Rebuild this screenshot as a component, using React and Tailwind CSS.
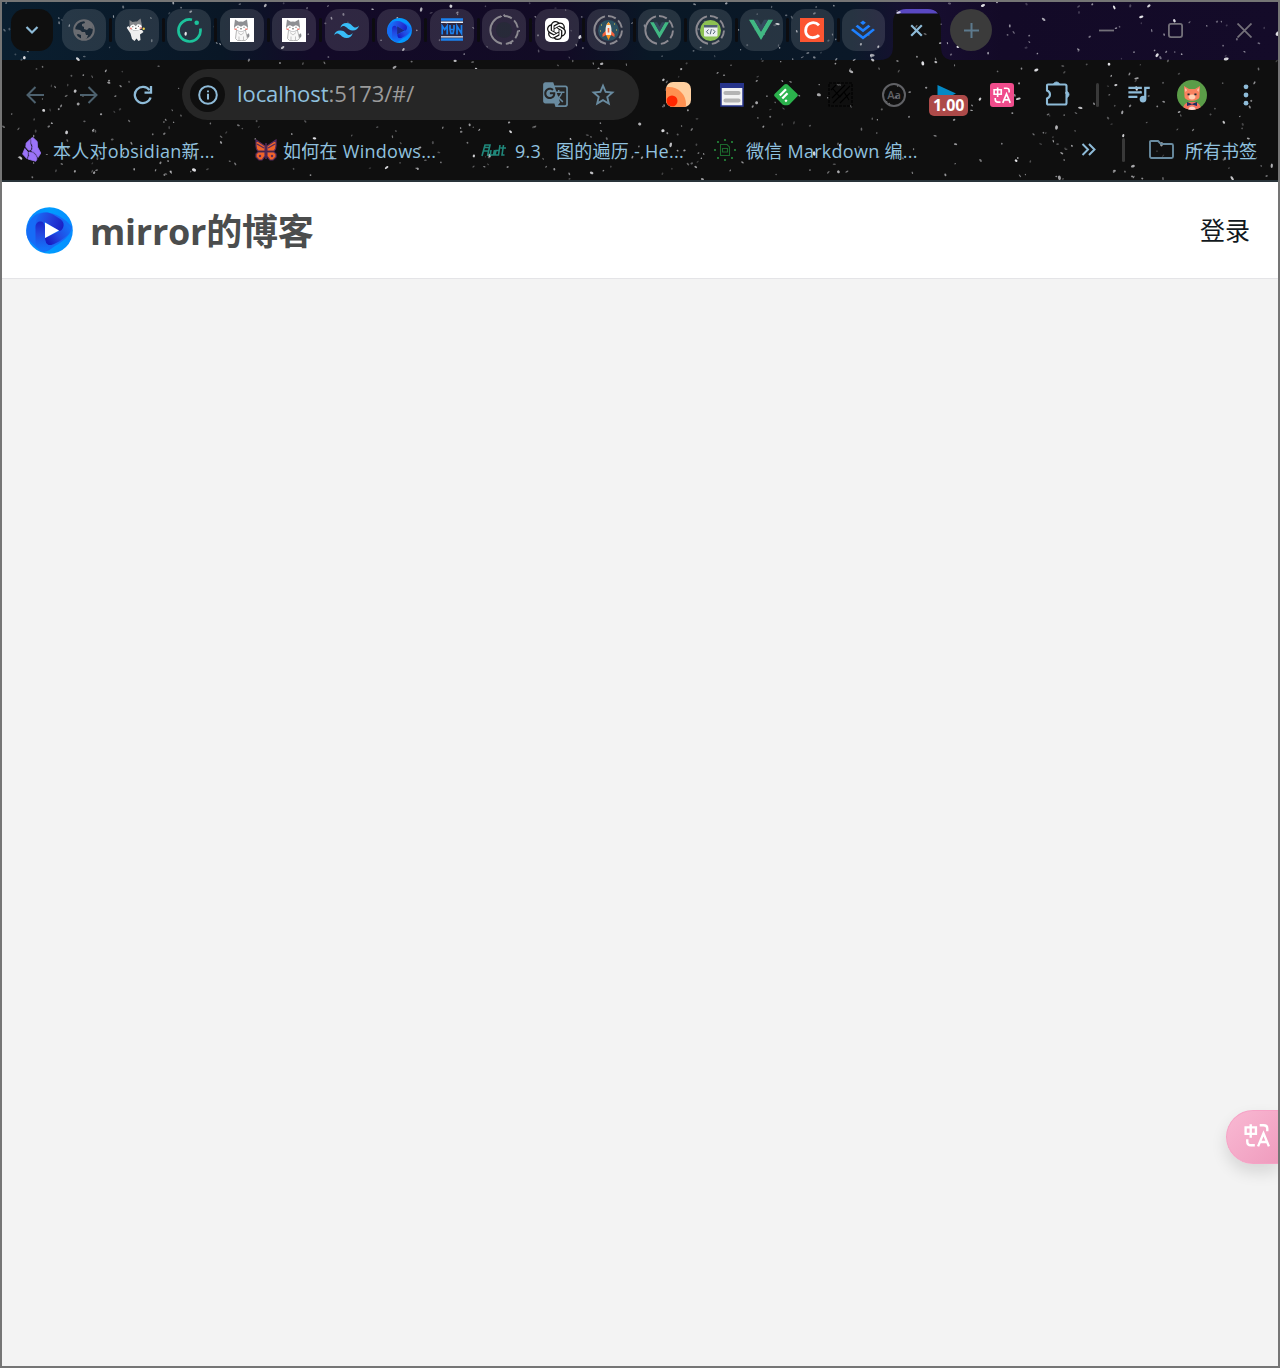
import React from "react";
import { SiOpenai, SiTailwindcss, SiJuejin } from "react-icons/si";
import { MdQueueMusic, MdGTranslate, MdStarBorder } from "react-icons/md";

const FONT = "font-['Open_Sans','Noto_Sans_CJK_SC',sans-serif]";

/* Deterministic star field behind the browser chrome. */
function makeStars() {
  let s = 20731;
  const rnd = () => {
    s = (s * 16807) % 2147483647;
    return s / 2147483647;
  };
  return Array.from({ length: 680 }, () => {
    const big = rnd() < 0.13;
    return {
      x: rnd() * 1276,
      y: rnd() * 178,
      rx: (big ? 1.4 : 0.7) + rnd() * 1,
      ry: (big ? 1 : 0.55) + rnd() * 0.5,
      a: rnd() * 180,
      o: big ? 0.65 + rnd() * 0.35 : 0.2 + rnd() * 0.5,
    };
  });
}
const STARS = makeStars();

/* Tab strip gradient, the raised shape of the active tab, and the stars over both. */
function Backdrop() {
  return (
    <div className="absolute inset-0 -z-10 bg-[#0f0f0f]">
      <div className="h-[58px] bg-[linear-gradient(90deg,#0a1f30_0px,#091726_220px,#130a28_310px,#120b25_560px,#091826_650px,#0a1828_850px,#180f32_910px,#130a27_1000px,#140b29_1276px)]" />
      <svg className="absolute left-0 top-0" width="1276" height="178">
        <g transform="translate(878 0)">
          <path d="M0 58C9 58 13 53 13 45V21C13 12 18 7 26 7H48C57 7 61 12 61 21V45C61 53 65 58 72 58Z" fill="#0f0f0f" />
          <path d="M16 11.5C19 8 22 7 26 7H48C52 7 55 8 58 11.5Z" fill="#5948c2" />
        </g>
        <g fill="#e8e8ec">
          {STARS.map((p, i) => (
            <ellipse key={i} cx={p.x} cy={p.y} rx={p.rx} ry={p.ry} opacity={p.o} transform={`rotate(${p.a} ${p.x} ${p.y})`} />
          ))}
        </g>
      </svg>
    </div>
  );
}

/* Three folded ribbons around a triangular centre. */
function Swirl({ size, play }) {
  return (
    <svg width={size} height={size} viewBox="0 0 47 47">
      <defs>
        <clipPath id="sw-clip"><circle cx="23.5" cy="23.5" r="23.3" /></clipPath>
        <linearGradient id="sw-bg" x1="0" y1="0" x2="1" y2="0"><stop offset="0" stopColor="#0a86ff" /><stop offset=".5" stopColor="#009dff" /><stop offset="1" stopColor="#078cff" /></linearGradient>
        <linearGradient id="sw-top" gradientUnits="userSpaceOnUse" x1="10" y1="10" x2="38" y2="22"><stop offset="0" stopColor="#1768f5" /><stop offset=".45" stopColor="#2542dc" /><stop offset="1" stopColor="#171dc2" /></linearGradient>
        <linearGradient id="sw-left" gradientUnits="userSpaceOnUse" x1="14" y1="12" x2="14" y2="42"><stop offset="0" stopColor="#171dc2" /><stop offset=".5" stopColor="#2348e0" /><stop offset="1" stopColor="#1273fa" /></linearGradient>
        <linearGradient id="sw-low" gradientUnits="userSpaceOnUse" x1="22" y1="35" x2="44" y2="20"><stop offset="0" stopColor="#171dc2" /><stop offset=".45" stopColor="#2348e0" /><stop offset="1" stopColor="#1273fa" /></linearGradient>
      </defs>
      <g clipPath="url(#sw-clip)">
        <rect width="47" height="47" fill="url(#sw-bg)" />
        <path d="M0 30C-1 16 8 5 18 5.5C28 5 39 11 46 20C44 30 36 35 29 39C24 43 20 45.5 16 44.5L10 40Z" fill="#166cf7" />
        <path d="M9.5 22V18C9.5 7 18 2.5 27 7.5L35 12.5C42 17 40 24 35 25L19 15Z" fill="url(#sw-top)" />
        <path d="M35 12.5C41 16 43 21 45.5 20C45 27 38 31 34 34L27 37.5C22 40 19 37 19 31L35 23.5C38 21 39 16 35 12.5Z" fill="url(#sw-low)" />
        <path d="M9.5 33V20C9.5 12.5 19 12.5 19 20V31C19 38 23 39 27 37.5C24 41 20 45 16 44C11 42 9.5 38 9.5 33Z" fill="url(#sw-left)" />
        <path d="M19 15.5L33 23.5L19 31Z" fill={play ? "#fff" : "#1c2a8a"} />
      </g>
    </svg>
  );
}

function Vue({ size = 24 }) {
  return (
    <svg width={size} height={size} viewBox="0 0 24 24">
      <path d="M0 1.7H5L12 13.5L19 1.7H24L12 22Z" fill="#41b883" />
      <path d="M5 1.7H9L12 7L15 1.7H19L12 13.8Z" fill="#35495e" />
    </svg>
  );
}

function Ring({ children }) {
  return (
    <span className="relative flex size-8 items-center justify-center">
      <svg className="absolute inset-0" width="32" height="32" viewBox="0 0 32 32" fill="none" stroke="#8c8a91" strokeWidth="1.9">
        <path d="M14 29.8A14 14 0 0 1 13 2.4" />
        <path d="M16 2A14 14 0 0 1 30 16A14 14 0 0 1 16 30" strokeDasharray="8.2 3" />
      </svg>
      <span className="relative flex">{children}</span>
    </span>
  );
}

function SittingHusky() {
  return (
    <svg width="24" height="24" viewBox="0 0 24 24">
      <rect width="24" height="24" fill="#fff" />
      <path d="M16.5 20Q20.5 20 19 15.5Q17.5 15 17 17Z" fill="#8b8c90" />
      <path d="M6.5 12.5H15.5L17.5 20.5Q16 23.5 11.5 22.5Q6.5 23.5 5.5 20.5Z" fill="#f8f8f8" stroke="#a5a5a5" strokeWidth=".8" />
      <path d="M4 9L5 1.5L8.8 3.8Q11 3.2 13 3.8L17 1.5L18 9Q17.5 13.3 11 13.6Q4.5 13.3 4 9Z" fill="#8e8f93" />
      <path d="M4.4 9.8Q6 6.8 8.8 7.4L11 8.8L13 7.4Q16 6.8 17.6 9.8Q16 13 11 13.2Q5.5 13 4.4 9.8Z" fill="#fff" />
      <path d="M7.9 8.8V9.8M14 8.8V9.8M10.2 10.8H11.8" stroke="#444" strokeWidth=".9" />
      <path d="M4.6 11.2H6.8M15.2 11.2H17.4" stroke="#f4857c" strokeWidth="1.6" />
      <path d="M8 14.5L11 17L14 14.5M9 18.5V22M13.5 18.5V22" stroke="#b0b0b0" strokeWidth=".7" fill="none" />
    </svg>
  );
}

function WavingHusky() {
  return (
    <svg width="24" height="24" viewBox="0 0 24 24">
      <path d="M7.5 12L3.2 8L1.7 9.8L5.5 15.5L7 21L9.5 23L11.5 20.5L13.5 23L15.5 22L15 16.5L18.5 14L17 12Z" fill="#efefef" />
      <path d="M4.5 8.5L4.5 2L7.5 4Q10 3 12 3.6L15.5 .5L17 7.5Q16.5 12.5 11 12.8Q5.5 12.5 4.5 8.5Z" fill="#85878b" />
      <path d="M4.8 9Q6.5 5.8 8.8 6.6L10.8 8.2L12.6 6.3Q15.5 5.5 16.9 8.4Q16 12.3 11 12.6Q6 12.3 4.8 9Z" fill="#fff" />
      <path d="M7.8 8.2V9.2M13.4 7.8V8.8M10 10.3H11.6" stroke="#333" strokeWidth=".9" />
      <path d="M4.8 10.5H6.8M14.7 10H16.7" stroke="#f4857c" strokeWidth="1.4" />
      <circle cx="18.7" cy="10.8" r="1.2" fill="#f0d34c" />
    </svg>
  );
}

function Globe() {
  return (
    <svg width="22" height="22" viewBox="0 0 22 22">
      <circle cx="11" cy="11" r="9.8" fill="#1c2b39" stroke="#6a6c71" strokeWidth="2" />
      <path d="M11 1H14L19 5L20 10L16 9L14 11L11 10V8L9 7V5L12 4ZM1 10L7 11L9 13H12L13 16L15 16L14 19L11 21L8 20L8 16L5 15L3 16Z" fill="#6a6c71" />
    </svg>
  );
}

const TABS = [
  <Globe />,
  <WavingHusky />,
  <svg width="26" height="26" viewBox="0 0 26 26" fill="none">
    <path d="M16 2.8A11 11 0 1 0 24.3 11.5" stroke="#1cc39b" strokeWidth="2.7" />
    <circle cx="20.7" cy="5.8" r="2.3" fill="#1cc39b" />
  </svg>,
  <SittingHusky />,
  <SittingHusky />,
  <SiTailwindcss size={25} color="#38bdf8" />,
  <Swirl size={25} />,
  <svg width="22" height="24" viewBox="0 0 22 24" fill="none">
    <path d="M0 1.5H22M0 21.5H22" stroke="#1b82f0" strokeWidth="2.6" />
    <path d="M0 4.2H22M0 18.9H22" stroke="#e7f1fc" strokeWidth="1.4" />
    <path d="M1.2 16.5V8L3.7 11.5L6.2 8V16.5M9 7V11L10 15.5H12L13 11V7M9 11.5H13M16 16.5V8L20.5 15.5V7" stroke="#1b82f0" strokeWidth="1.7" />
  </svg>,
  <Ring><span className="size-4 rounded-full bg-[#1f2c2f]/40" /></Ring>,
  <span className="flex size-6 items-center justify-center rounded-[5px] bg-white"><SiOpenai size={19} color="#111" /></span>,
  <Ring>
    <svg width="21" height="21" viewBox="0 0 21 21">
      <circle cx="10.5" cy="10.5" r="10.5" fill="#2d5262" />
      <path d="M8 10.5L4.5 14V17L8 15ZM13 10.5L16.5 14V17L13 15Z" fill="#f3613a" />
      <path d="M10.5 2C13.5 5 14 9 13 15H8C7 9 7.5 5 10.5 2Z" fill="#f1ede4" />
      <path d="M10.5 2L12.4 5H8.6ZM8 15H13L10.5 20Z" fill="#f7921e" />
      <path d="M9.7 8H11.3V12.5H9.7Z" fill="#f3613a" />
      <path d="M3 5H4M16 4H17M18 10H19M2 11H3" stroke="#f4cf47" />
    </svg>
  </Ring>,
  <Ring><Vue size={19} /></Ring>,
  <Ring>
    <svg width="21" height="21" viewBox="0 0 21 21">
      <circle cx="10.5" cy="10.5" r="10.5" fill="#8cc152" />
      <rect x="4" y="5" width="13.5" height="11.5" rx="1" fill="#eceff1" />
      <path d="M4 5H17.5V7.5H4Z" fill="#4f6173" />
      <path d="M8.5 9.5L6.5 11.7L8.5 14M13 9.5L15 11.7L13 14M11.4 9.2L10.2 14.3" stroke="#4f6173" fill="none" />
    </svg>
  </Ring>,
  <Vue size={24} />,
  <svg width="24" height="24" viewBox="0 0 24 24">
    <rect width="24" height="24" fill="#fc5531" />
    <path d="M19 7.2C15.5 3.5 8 3.5 6 10C4.5 16 8 20 13 19.7C15.8 19.5 17.8 18.7 19 17.2" fill="none" stroke="#fff" strokeWidth="2.8" />
  </svg>,
  <SiJuejin size={24} color="#1e80ff" />,
];

function TabStrip() {
  return (
    <div className="flex h-[58px] items-center pb-[2px]">
      <div className="ml-[9px] mr-[9px] flex size-[42px] shrink-0 items-center justify-center rounded-[14px] bg-[#0f0f0f]">
        <svg width="14" height="10" viewBox="0 0 14 10" fill="none" stroke="#8ebbd8" strokeWidth="2.2"><path d="M1.5 2L7 7.5L12.5 2" /></svg>
      </div>
      {TABS.map((icon, i) => (
        <div key={i} className={i < 10 ? "flex w-[52.5px] shrink-0 items-center" : "flex w-[51px] shrink-0 items-center"}>
          <div className={(i < 10 ? "w-11" : "w-[42.5px]") + " flex h-[42px] items-center justify-center rounded-[14px] bg-white/[.12]"}>{icon}</div>
          {i < 15 && <div className="ml-[3px] h-6 w-[3px] rounded-sm bg-[#0d0d10]" />}
        </div>
      ))}
      <div className="flex w-[57px] shrink-0 pl-[17px]">
        <svg width="13" height="13" viewBox="0 0 13 13" stroke="#8ebbd8" strokeWidth="2.2"><path d="M1.2 1.2L11.8 11.8M11.8 1.2L1.2 11.8" /></svg>
      </div>
      <div className="flex size-[42px] shrink-0 items-center justify-center rounded-full bg-[#3b3b3b]">
        <svg width="15" height="15" viewBox="0 0 15 15" stroke="#5d7a8d" strokeWidth="2"><path d="M7.5 0V15M0 7.5H15" /></svg>
      </div>
      <div className="ml-auto flex shrink-0 items-center gap-[54px] pr-[26px] pt-px">
        <svg width="15" height="15" viewBox="0 0 15 15" stroke="#737079" strokeWidth="1.8"><path d="M0 7.5H15" /></svg>
        <svg width="15" height="15" viewBox="0 0 15 15" fill="none" stroke="#737079" strokeWidth="1.8"><rect x=".9" y=".9" width="13.2" height="13.2" rx="2" /></svg>
        <svg width="15" height="15" viewBox="0 0 15 15" stroke="#737079" strokeWidth="1.8"><path d="M.5 .5L14.5 14.5M14.5 .5L.5 14.5" /></svg>
      </div>
    </div>
  );
}

function TranslateGlyph({ size, weight = 1.9 }) {
  return (
    <svg width={size} height={size} viewBox="0 0 24 24" fill="none" stroke="#fff" strokeWidth={weight}>
      <path d="M1.5 5H11V11H1.5ZM6.2 2V14.5M14.5 3H18C20.5 3 21.5 4 21.5 6V8.5M3 16V18C3 20.5 4 21.5 6.5 21.5H10" />
      <path d="M13 22.5L18 10.5L23 22.5M14.7 18.5H21.3" />
    </svg>
  );
}

function Slot({ children }) {
  return <div className="flex w-[54px] shrink-0 items-center justify-center">{children}</div>;
}

function Toolbar() {
  return (
    <div className="flex h-[69px] items-center pl-[6px]">
      <Slot><svg width="18" height="18" viewBox="0 0 18 18" fill="none" stroke="#4d616e" strokeWidth="2"><path d="M18 9H2M9.5 1L1.5 9L9.5 17" /></svg></Slot>
      <Slot><svg width="18" height="18" viewBox="0 0 18 18" fill="none" stroke="#4d616e" strokeWidth="2"><path d="M0 9H16M8.5 1L16.5 9L8.5 17" /></svg></Slot>
      <Slot>
        <svg width="20" height="20" viewBox="0 0 20 20" fill="none" stroke="#8ebbd8" strokeWidth="2.3">
          <path d="M17.6 12.5A8.1 8.1 0 1 1 16.5 5.2" /><path d="M18 1V7.6H11.5" />
        </svg>
      </Slot>
      <div className="ml-3 mr-3 flex h-[51px] w-[457px] shrink-0 items-center rounded-full bg-[#262626] pl-2">
        <div className="flex size-[35px] items-center justify-center rounded-full bg-[#0f0f0f]">
          <svg width="20" height="20" viewBox="0 0 20 20" fill="none" stroke="#8ebbd8" strokeWidth="2"><circle cx="10" cy="10" r="8.8" /><path d="M10 8.8V14.5M10 5.4V7.2" /></svg>
        </div>
        <div className="ml-3 whitespace-nowrap pb-[3px] text-[22px] leading-[30px] tracking-[-0.08px] text-[#9b9b9b]"><span className="text-[#8fc1df]">localhost</span>:5173/#/</div>
        <div className="ml-auto flex w-[97px] items-center">
          <MdGTranslate size={27} color="#698ba0" />
          <MdStarBorder className="ml-[20px]" size={28} color="#698ba0" />
        </div>
      </div>
      <Slot>
        <svg width="25" height="25" viewBox="0 0 25 25">
          <defs><clipPath id="ext"><rect width="25" height="25" rx="7" /></clipPath></defs>
          <g clipPath="url(#ext)"><rect width="25" height="25" fill="#ffd0a0" /><circle cx="3" cy="22" r="17" fill="#ff9050" /><circle cx="6" cy="19" r="5.5" fill="#ff2600" /></g>
        </svg>
      </Slot>
      <Slot>
        <svg width="24" height="24" viewBox="0 0 24 24">
          <rect x="1" y="1" width="22" height="22" fill="#f3f3f3" stroke="#27348b" strokeWidth="1.5" />
          <path d="M0 0H24V5H0Z" fill="#27348b" />
          <path d="M5.5 10H18.5M5.5 17.5H18.5" stroke="#b4b4b4" strokeWidth="4.2" strokeLinecap="round" />
        </svg>
      </Slot>
      <Slot><svg width="24" height="24" viewBox="0 0 24 24">
        <path d="M10.4 1.6Q12 .2 13.6 1.6L23.2 10.8Q24.5 12.3 23.2 13.6L15.5 21.5Q14.5 22.3 13.3 22.3H10.7Q9.5 22.3 8.5 21.5L.8 13.6Q-.5 12.3.8 10.8Z" fill="#2bb24c" />
        <path d="M5.8 12.5L12 6.3M8.3 15.5L13.5 10.3M11.2 18.5L12.8 17" stroke="#fff" strokeWidth="2.3" />
      </svg></Slot>
      <Slot>
        <svg width="25" height="25" viewBox="0 0 25 25" fill="none" stroke="#000" strokeWidth="1.1">
          <rect x="1" y="1" width="23" height="23" strokeDasharray="3 1" /><path d="M3 8L8 3M4 16L17 3M5 21L22 4M12 21L22 11M5 7L12 15L16 10L21 18" />
        </svg>
      </Slot>
      <Slot><div className="flex size-6 items-center justify-center rounded-full border-2 border-[#606165] text-[11px] font-semibold leading-none text-[#606165]">Aa</div></Slot>
      <Slot>
        <div className="relative h-6 w-6">
          <svg width="24" height="24" viewBox="0 0 24 24"><path d="M1.5 2V19L20 10.5Z" fill="#0489c4" /></svg>
          <div className="absolute -left-[7px] top-[12px] flex h-[21px] w-[39px] items-center justify-center rounded-[5px] bg-[#ad4a49] text-[16px] font-bold leading-none tracking-[-0.2px] text-white">1.00</div>
        </div>
      </Slot>
      <Slot><div className="flex size-6 items-center justify-center rounded-[3px] bg-[#f04c8c]"><TranslateGlyph size={18} weight={2.2} /></div></Slot>
      <Slot>
        <svg className="mb-[3px] ml-[3px]" width="26" height="26" viewBox="0 0 26 26" fill="none" stroke="#8ebbd8" strokeWidth="2.1">
          <path d="M3 4.5H20Q21.5 4.5 21.5 6V23Q21.5 24.5 20 24.5H3Q2 24.5 2 23.5V18.5C6 17 6 12 2 10.5V5.5Q2 4.5 3 4.5Z" />
          <path d="M8.5 4A3.2 3.2 0 0 1 14.5 4ZM22 11.5A3.2 3.2 0 0 1 22 17.5Z" fill="#8ebbd8" stroke="#8ebbd8" strokeWidth=".8" />
        </svg>
      </Slot>
      <div className="flex w-7 shrink-0 justify-center"><div className="h-6 w-[3px] rounded bg-[#393939]" /></div>
      <Slot><MdQueueMusic className="mb-[3px]" size={27} color="#8ebbd8" /></Slot>
      <Slot>
        <svg width="30" height="30" viewBox="0 0 30 30">
          <defs><clipPath id="avatar"><circle cx="15" cy="15" r="15" /></clipPath></defs>
          <g clipPath="url(#avatar)">
            <rect width="30" height="30" fill="#5b9d48" />
            <path d="M6 31C6 25 8 22 15 22S24 25 24 31Z" fill="#f4735e" /><path d="M11 31C11 25 19 25 19 31Z" fill="#fcd6cf" />
            <path d="M7 6L12 9H18L23 6L22.5 17C21 22 9 22 7.5 17Z" fill="#f98260" />
            <path d="M8 8L10 10L8.5 12ZM22 8L20 10L21.5 12Z" fill="#ffd0b4" />
            <ellipse cx="15" cy="17" rx="3.4" ry="2.4" fill="#ffd0b4" />
            <path d="M10.5 14.3H12.6M17.4 14.3H19.5" stroke="#202c35" strokeWidth="1.8" />
            <path d="M10 22L15 24L20 22V26L15 24.5L10 26Z" fill="#1f2d63" />
          </g>
        </svg>
      </Slot>
      <Slot><svg width="6" height="22" viewBox="0 0 6 22" fill="#8ebbd8"><circle cx="3" cy="2.8" r="2.4" /><circle cx="3" cy="11" r="2.4" /><circle cx="3" cy="19.2" r="2.4" /></svg></Slot>
    </div>
  );
}

function Bookmark({ icon, width, iconWidth, children }) {
  return (
    <div className="flex shrink-0 items-center" style={{ width }}>
      <div className="flex shrink-0 items-center" style={{ width: iconWidth }}>{icon}</div>
      <div className="whitespace-pre tracking-[0.27px]">{children}</div>
    </div>
  );
}

function Bookmarks() {
  return (
    <div className="flex h-[51px] items-center pb-[7px] pl-5 text-[18px] leading-[26px] text-[#8fc1df]">
      <Bookmark width={232} iconWidth={31} icon={
        <svg className="mb-[3px]" width="20" height="25" viewBox="0 0 20 25" fill="#9b73f8" stroke="#9b73f8" strokeWidth=".8" strokeLinejoin="round">
          <path d="M9.5 1Q10.5 .2 11.5 1L15.2 4.5L15.5 10L18.8 16Q17.5 18.5 16 20.5Q14 15.5 9.5 14Q12 9 9.3 6.5Z" />
          <path d="M8.3 2.2L4.2 6L3.8 10L6.5 13.2L8.5 13Q10.2 9.5 8.1 7Z" />
          <path d="M2.8 11.5L.6 17L4.7 21.5Q6.3 18 5.4 14.5Z" />
          <path d="M6.8 15Q13.5 14.8 15 22.1L13.8 24.3L5.8 22Q8 18.5 6.8 15Z" />
        </svg>}>本人对obsidian新...</Bookmark>
      <Bookmark width={227} iconWidth={29} icon={
        <svg className="mb-[2px] ml-px" width="22" height="22" viewBox="0 0 22 22">
          <path d="M1 1L10 7V12H3Q1 10 1 7ZM21 1L12 7V12H19Q21 10 21 7Z" fill="#f06429" stroke="#572c5e" strokeWidth="1.2" />
          <path d="M3 13H10V17L7 21H4L1 18V15ZM19 13H12V17L15 21H18L21 18V15Z" fill="#f06429" stroke="#572c5e" strokeWidth="1.2" />
          <path d="M2 5L9 9M20 5L13 9M11 4V20" stroke="#572c5e" strokeWidth="1.4" /><circle cx="5" cy="17" r="1.2" fill="#572c5e" /><circle cx="17" cy="17" r="1.2" fill="#572c5e" />
        </svg>}>如何在 Windows...</Bookmark>
      <Bookmark width={233} iconWidth={34} icon={
        <svg className="mb-[2px]" width="25" height="15" viewBox="0 0 25 15" fill="none" stroke="#20887b" strokeWidth="1.6">
          <path d="M1 13L4 2H9L6.5 13M2.5 8H8M3 4.5H9M10 7L9.3 12H12.5L13.5 7M19 2L17.5 12H14L15 7.5H18M22.5 2L21 12H23.5M19.5 5H25" />
        </svg>}>{"9.3   图的遍历 - He..."}</Bookmark>
      <Bookmark width={213} iconWidth={32} icon={
        <svg className="mb-[2px]" width="22" height="22" viewBox="0 0 22 22" fill="none" stroke="#1c682d" strokeWidth="1.1">
          <path d="M6.5 5.5H13L15.5 8V16.5H6.5ZM8.5 9.5H13.5V13H8.5Z" />
          <g fill="#2aa545" stroke="none"><circle cx="11" cy="1" r=".9" /><circle cx="18" cy="3" r=".9" /><circle cx="21" cy="11" r=".9" /><circle cx="18" cy="19" r=".9" /><circle cx="11" cy="21" r=".9" /><circle cx="4" cy="19" r=".9" /><circle cx="1" cy="11" r=".9" /><circle cx="4" cy="3" r=".9" /></g>
        </svg>}>微信 Markdown 编...</Bookmark>
      <div className="ml-auto mr-[21px] flex shrink-0 items-center">
        <svg className="mb-[3px]" width="15" height="13" viewBox="0 0 15 13" fill="none" stroke="#8ebbd8" strokeWidth="2"><path d="M1.5 1L7 6.5L1.5 12M8 1L13.5 6.5L8 12" /></svg>
        <div className="mb-[3px] ml-[26px] mr-[24px] h-6 w-[3px] rounded bg-[#393939]" />
        <svg className="mb-[3px] mr-[11px]" width="25" height="19" viewBox="0 0 25 19" fill="none" stroke="#698ba0" strokeWidth="1.9"><path d="M1 16V2Q1 1 2 1H9L12 4H22.5Q24 4 24 5.5V16.5Q24 18 22.5 18H2.5Q1 18 1 16Z" /></svg>
        <span>所有书签</span>
      </div>
    </div>
  );
}

export default function App() {
  return (
    <div className={"flex h-[1368px] w-[1280px] flex-col overflow-hidden border-2 border-[#757575] bg-[#f3f3f3] " + FONT}>
      <div className="relative isolate h-[180px] shrink-0 border-b-2 border-[#29343a] bg-[#0f0f0f]">
        <Backdrop />
        <TabStrip />
        <Toolbar />
        <Bookmarks />
      </div>
      <header className="flex h-[97px] shrink-0 items-center justify-between border-b border-[#e4e4e7] bg-white pl-6 pr-7">
        <div className="flex items-center">
          <Swirl size={47} play />
          <h1 className="ml-[17px] whitespace-nowrap pt-[3px] text-[36px] font-bold leading-[48px] tracking-[-0.25px] text-[#4b4d4d]">mirror的博客</h1>
        </div>
        <a className="text-[25px] leading-9 text-[#111820]">登录</a>
      </header>
      <main className="flex flex-1 items-end justify-end pb-[202px]">
        <div className="flex h-[54px] w-[52px] items-center rounded-l-full border border-r-0 border-[#f5a2c5] bg-gradient-to-br from-[#f9b9d3] to-[#ef9cbe] pl-[17px] pb-1 shadow-[0_8px_16px_rgba(0,0,0,0.12)]">
          <TranslateGlyph size={26} weight={2.2} />
        </div>
      </main>
    </div>
  );
}
